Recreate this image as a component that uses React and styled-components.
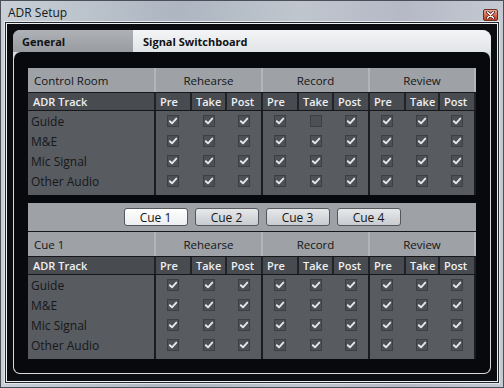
import styled, { createGlobalStyle } from 'styled-components';

const GlobalStyle = createGlobalStyle`
  html, body {
    margin: 0;
    padding: 0;
    background: #aab2bc;
  }
  body {
    font-family: "Open Sans", "Liberation Sans", sans-serif;
  }
`;

const GROUPS = ['Rehearse', 'Record', 'Review'];
const SUBS = ['Pre', 'Take', 'Post'];
const TRACKS = ['Guide', 'M&E', 'Mic Signal', 'Other Audio'];
const CUES = ['Cue 1', 'Cue 2', 'Cue 3', 'Cue 4'];

// checked[track][group][sub]
const allOn = () => TRACKS.map(() => GROUPS.map(() => SUBS.map(() => true)));

const controlRoom = allOn();
controlRoom[0][1][1] = false;
const cueOne = allOn();

function Check({ on }) {
    return (
        <Box>
            {on && (
                <svg width="10" height="10" viewBox="0 0 10 10">
                    <path d="M1.8 5.2 L4 7.3 L8.3 2.6" fill="none" stroke="#e4e6e8" strokeWidth="1.9" strokeLinecap="round" strokeLinejoin="round" />
                </svg>
            )}
        </Box>
    );
}

function Matrix({ title, data }) {
    return (
        <>
            <HeadRow>
                <HeadCell $left>{title}</HeadCell>
                {GROUPS.map(g => <HeadCell key={g}>{g}</HeadCell>)}
            </HeadRow>
            <SubRow>
                <SubLabel>ADR Track</SubLabel>
                {GROUPS.map(g => (
                    <SubGroup key={g}>
                        {SUBS.map(s => <SubCell key={s}>{s}</SubCell>)}
                    </SubGroup>
                ))}
            </SubRow>
            <Body>
                <Column>
                    {TRACKS.map(t => <TrackName key={t}>{t}</TrackName>)}
                </Column>
                {GROUPS.map((g, gi) => (
                    <ChecksColumn key={g}>
                        {TRACKS.map((t, ti) => SUBS.map((s, si) => (
                            <CheckCell key={t + s}>
                                <Check on={data[ti][gi][si]} />
                            </CheckCell>
                        )))}
                    </ChecksColumn>
                ))}
            </Body>
        </>
    );
}

export default function App() {
    return (
        <>
            <GlobalStyle />
            <Window>
                <TitleBar>
                    <Title>ADR Setup</Title>
                    <CloseButton>
                        <svg width="9" height="8" viewBox="0 0 9 8">
                            <path d="M1.5 1 L7.5 7 M7.5 1 L1.5 7" stroke="#3a1410" strokeWidth="3" strokeLinecap="round" />
                            <path d="M1.5 1 L7.5 7 M7.5 1 L1.5 7" stroke="#ffffff" strokeWidth="1.6" strokeLinecap="round" />
                        </svg>
                    </CloseButton>
                </TitleBar>
                <Client>
                    <Panel>
                        <TabStrip>
                            <Tab>General</Tab>
                            <Tab $active>Signal Switchboard</Tab>
                        </TabStrip>
                        <TabBody>
                            <Section>
                                <Matrix title="Control Room" data={controlRoom} />
                            </Section>
                            <Section>
                                <CueBar>
                                    {CUES.map((c, i) => <CueButton key={c} $active={i === 0}>{c}</CueButton>)}
                                </CueBar>
                                <Matrix title="Cue 1" data={cueOne} />
                            </Section>
                        </TabBody>
                    </Panel>
                </Client>
            </Window>
        </>
    );
}

const Window = styled.div`
    width: 504px;
    height: 388px;
    box-sizing: border-box;
    display: flex;
    flex-direction: column;
    overflow: hidden;
    border: 1px solid #4b5058;
    background: linear-gradient(90deg, #c8cfd6 0%, #adb6c1 35%, #bfc6ce 60%, #b6b8c6 80%, #c3cad2 100%);
`;

const TitleBar = styled.div`
    height: 23px;
    display: flex;
    align-items: flex-start;
    justify-content: space-between;
    padding: 0 5px 0 7px;
`;

const Title = styled.span`
    font-size: 12px;
    line-height: 14px;
    margin-top: 5px;
    color: #151a20;
`;

const CloseButton = styled.div`
    width: 15px;
    height: 12px;
    margin-top: 8px;
    box-sizing: border-box;
    border: 1px solid #6e2b1f;
    border-radius: 2px;
    background: linear-gradient(180deg, #eeb1a0 0%, #d6674c 50%, #c0402a 100%);
    display: flex;
    align-items: center;
    justify-content: center;
`;

const Client = styled.div`
    flex: 1;
    margin: 0 5px 5px 5px;
    padding: 6px 6px 7px 6px;
    background: #0a0c0f;
    border: 1px solid #eef1f4;
    box-shadow: 0 0 0 1px #23272c, 0 0 0 2px #e2e6ea;
    display: flex;
`;

const Panel = styled.div`
    flex: 1;
    display: flex;
    flex-direction: column;
    border-radius: 7px 8px 7px 7px;
    background: #d7dadd;
    padding: 0 1px 1px 1px;
`;

const TabStrip = styled.div`
    height: 22px;
    display: flex;
    margin: 0 -1px;
    border-radius: 7px 9px 0 0;
    overflow: hidden;
`;

const Tab = styled.div`
    flex: ${p => (p.$active ? 1 : '0 0 120px')};
    box-sizing: border-box;
    display: flex;
    align-items: center;
    padding-left: ${p => (p.$active ? '10px' : '9px')};
    font-size: 11px;
    font-weight: 700;
    color: #101214;
    background: ${p => (p.$active
        ? 'linear-gradient(180deg, #f3f4f5 0%, #e2e5e8 100%)'
        : 'linear-gradient(180deg, #aeb1b5 0%, #989ca1 100%)')};
`;

const TabBody = styled.div`
    flex: 1;
    background: #07090c;
    border-radius: 7px 7px 6px 6px;
    padding: 16px 14px 14px 14px;
    display: flex;
    flex-direction: column;
    gap: 8px;
`;

const Section = styled.div`
    display: flex;
    flex-direction: column;
    gap: 1px;
    background: #15171a;
`;

const cols = 'grid-template-columns: 126px 105px 105px 104px;';

const HeadRow = styled.div`
    display: grid;
    ${cols}
    column-gap: 2px;
    background: #b2b5b9;
    height: 24px;
`;

const HeadCell = styled.div`
    background: #9ea1a5;
    display: flex;
    align-items: center;
    justify-content: ${p => (p.$left ? 'flex-start' : 'center')};
    padding-left: ${p => (p.$left ? '6px' : '0')};
    font-size: 11.5px;
    color: #141618;
`;

const SubRow = styled.div`
    display: grid;
    ${cols}
    column-gap: 2px;
    background: #202327;
    height: 17px;
`;

const SubLabel = styled.div`
    background: #484b50;
    display: flex;
    align-items: center;
    padding-left: 5px;
    font-size: 11px;
    font-weight: 600;
    color: #eef0f2;
`;

const SubGroup = styled.div`
    display: grid;
    grid-template-columns: 34px 1fr 34px;
    column-gap: 2px;
`;

const SubCell = styled.div`
    background: #484b50;
    display: flex;
    align-items: center;
    padding-left: 4px;
    font-size: 11px;
    font-weight: 600;
    color: #eef0f2;
`;

const Body = styled.div`
    display: grid;
    ${cols}
    column-gap: 2px;
    background: #1a1c1f;
`;

const Column = styled.div`
    background: #585b60;
    padding: 0 0 4px;
    display: flex;
    flex-direction: column;
`;

const TrackName = styled.div`
    height: 20px;
    display: flex;
    align-items: center;
    padding-left: 3px;
    font-size: 12px;
    color: #16181a;
`;

const ChecksColumn = styled.div`
    background: #585b60;
    padding: 0 0 4px;
    display: grid;
    grid-template-columns: 34px 1fr 34px;
    grid-auto-rows: 20px;
    column-gap: 2px;
`;

const CheckCell = styled.div`
    display: flex;
    align-items: center;
    justify-content: center;
`;

const Box = styled.div`
    width: 12px;
    height: 12px;
    box-sizing: border-box;
    border: 1px solid #3c3f43;
    background: #4d5055;
    display: flex;
    align-items: center;
    justify-content: center;
`;

const CueBar = styled.div`
    height: 28px;
    background: #9ea1a5;
    display: flex;
    align-items: center;
    justify-content: center;
    gap: 7px;
    padding-left: 20px;
`;

const CueButton = styled.div`
    width: 64px;
    height: 18px;
    box-sizing: border-box;
    border: 1px solid #54575b;
    border-radius: 3px;
    background: ${p => (p.$active
        ? 'linear-gradient(180deg, #ffffff 0%, #eceef0 100%)'
        : 'linear-gradient(180deg, #e6e8ea 0%, #c9ccd0 100%)')};
    display: flex;
    align-items: center;
    justify-content: center;
    font-size: 12px;
    color: #141618;
`;
